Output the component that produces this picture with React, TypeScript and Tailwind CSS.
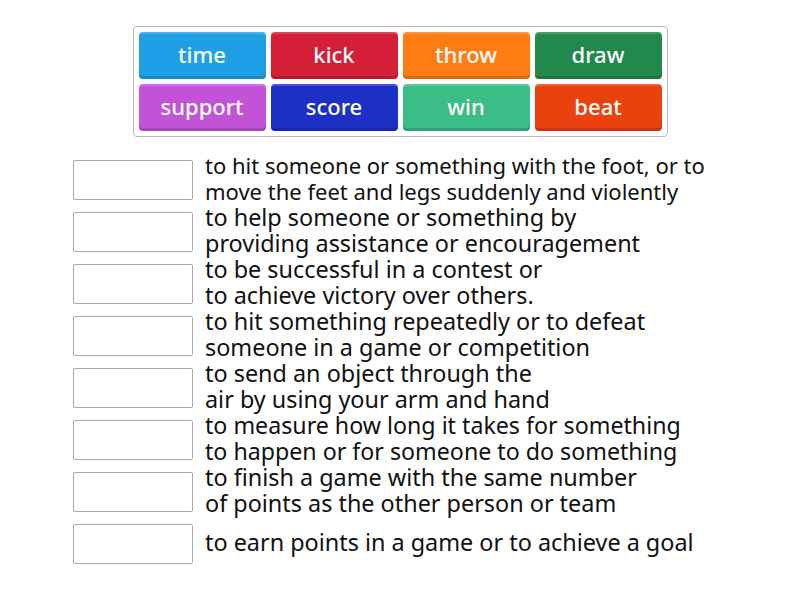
const tiles = [
  { word: "time", cls: "bg-[#1fa0e6]" },
  { word: "kick", cls: "bg-[#d51e37]" },
  { word: "throw", cls: "bg-[#fd7d12]" },
  { word: "draw", cls: "bg-[#22894c]" },
  { word: "support", cls: "bg-[#c353d6]" },
  { word: "score", cls: "bg-[#1c30c6]" },
  { word: "win", cls: "bg-[#3abd86]" },
  { word: "beat", cls: "bg-[#e9420e]" },
];

// each clue is sized to fit its row, so the first one is a bit smaller
const defs = [
  { size: "text-[22px]", lines: ["to hit someone or something with the foot, or to", "move the feet and legs suddenly and violently"] },
  { size: "text-[23.4px]", lines: ["to help someone or something by", "providing assistance or encouragement"] },
  { size: "text-[23.4px]", lines: ["to be successful in a contest or", "to achieve victory over others."] },
  { size: "text-[23.4px]", lines: ["to hit something repeatedly or to defeat", "someone in a game or competition"] },
  { size: "text-[23.4px]", lines: ["to send an object through the", "air by using your arm and hand"] },
  { size: "text-[23.2px]", lines: ["to measure how long it takes for something", "to happen or for someone to do something"] },
  { size: "text-[23.4px]", lines: ["to finish a game with the same number", "of points as the other person or team"] },
  { size: "text-[23.4px]", lines: ["to earn points in a game or to achieve a goal"] },
];

export default function App() {
  return (
    <div className="w-[800px] h-[600px] bg-white font-['Noto_Sans',sans-serif] pt-[26px]">
      <div className="mx-auto w-[535px] border border-[#b8b8b8] rounded-[4px] p-[5px] grid grid-cols-4 gap-[5px]">
        {tiles.map((t) => (
          <div
            key={t.word}
            className={`${t.cls} h-[47px] pb-[3px] rounded-[4px] flex items-center justify-center text-white text-[22px] font-medium shadow-[inset_0_-3px_0_rgba(0,0,0,0.15),inset_0_2px_0_rgba(255,255,255,0.18)]`}
          >
            {t.word}
          </div>
        ))}
      </div>
      <div className="mt-[17px] ml-[73px] flex flex-col">
        {defs.map((d, i) => (
          <div key={i} className="h-[52px] flex items-center">
            <div className="w-[120px] h-[40px] border border-[#aaa] rounded-[2px] shrink-0" />
            <div className={`ml-[12px] ${d.size} leading-[26px] text-[#111] -mt-[4px]`}>
              {d.lines.map((l) => (
                <div key={l}>{l}</div>
              ))}
            </div>
          </div>
        ))}
      </div>
    </div>
  );
}
